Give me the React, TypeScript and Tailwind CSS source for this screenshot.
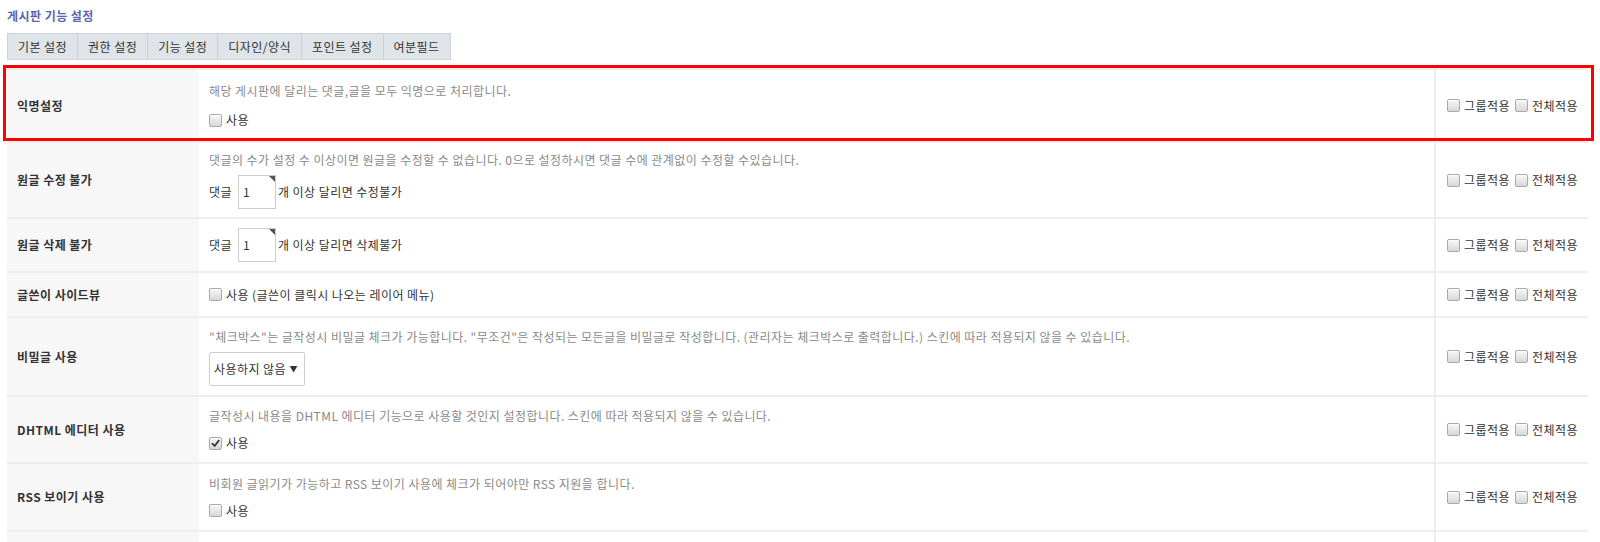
import React from "react";

function Box({ checked = false }: { checked?: boolean }) {
  return (
    <span className="inline-flex h-[13px] w-[13px] shrink-0 items-center justify-center rounded-[2px] border border-[#a9a9a9] bg-[linear-gradient(#f7f7f7,#d8d8d8)] shadow-[inset_0_1px_0_#fff]">
      {checked && (
        <svg width="9" height="9" viewBox="0 0 10 10">
          <path d="M1.5 5.2 L4 7.8 L8.6 1.8" fill="none" stroke="#333" strokeWidth="1.9" strokeLinecap="round" strokeLinejoin="round" />
        </svg>
      )}
    </span>
  );
}

function Check({ label, checked = false }: { label: string; checked?: boolean }) {
  return (
    <span className="inline-flex items-center gap-[4px] text-[#333] leading-[18px]">
      <Box checked={checked} />
      <span>{label}</span>
    </span>
  );
}

function NumBox() {
  return (
    <span className="relative inline-flex h-[34px] w-[38px] items-center border border-[#cccccc] bg-white pl-[4px] text-[12px] text-[#333]">
      1
      <span className="absolute right-0 top-0 h-0 w-0 border-l-[6px] border-t-[6px] border-l-transparent border-t-[#555]" />
    </span>
  );
}

function Row({
  label,
  h,
  children,
  highlight = false,
  gap = "gap-[9px]",
  empty = false,
}: {
  label: string;
  h: string;
  children?: React.ReactNode;
  highlight?: boolean;
  gap?: string;
  empty?: boolean;
}) {
  return (
    <div className={`relative flex border-b-2 border-[#eeeeee] ${h}`}>
      <div className="flex w-[192px] shrink-0 items-center bg-[#f7f7f7] pl-[10px] font-bold text-[#333]">
        {label}
      </div>
      <div className={`flex flex-1 flex-col justify-center pl-[10px] ${gap}`}>{children}</div>
      <div className="flex w-[154px] shrink-0 items-center gap-[5px] border-l-2 border-[#eeeeee] pl-[11px]">
        {!empty && (
          <>
            <Check label="그룹적용" />
            <Check label="전체적용" />
          </>
        )}
      </div>
      {highlight && (
        <div className="pointer-events-none absolute -left-[4px] -right-[6px] -top-[5px] bottom-[0px] border-[3px] border-[#ff0000]" />
      )}
    </div>
  );
}

function Desc({ children }: { children: React.ReactNode }) {
  return <div className="leading-[18px] text-[#8a8a8a]">{children}</div>;
}

export default function App() {
  const tabs = ["기본 설정", "권한 설정", "기능 설정", "디자인/양식", "포인트 설정", "여분필드"];
  return (
    <div className="h-[542px] overflow-hidden bg-white pl-[7px] pr-[12px] pt-[7px] font-['Noto_Sans_CJK_KR','Noto_Sans',sans-serif] text-[12px] tracking-[0.45px] text-[#333]">
      <div className="h-[18px] text-[12px] font-bold leading-[18px] text-[#5965ae]">게시판 기능 설정</div>
      <div className="mt-[8px] flex h-[27px] w-fit border border-[#cdd3d8] bg-[#dee4e8]">
        {tabs.map((t, i) => (
          <div
            key={t}
            className={`flex items-center px-[10px] leading-[25px] text-[#333] ${i > 0 ? "border-l border-[#c9cfd4]" : ""}`}
          >
            {t}
          </div>
        ))}
      </div>
      <div className="mt-[8px] border-t-2 border-[#eeeeee]">
        <Row label="익명설정" h="h-[73px]" highlight gap="gap-[11px]">
          <Desc>해당 게시판에 달리는 댓글,글을 모두 익명으로 처리합니다.</Desc>
          <div className="flex">
            <Check label="사용" />
          </div>
        </Row>
        <Row label="원글 수정 불가" h="h-[76px]" gap="gap-[6px]">
          <Desc>댓글의 수가 설정 수 이상이면 원글을 수정할 수 없습니다. 0으로 설정하시면 댓글 수에 관계없이 수정할 수있습니다.</Desc>
          <div className="flex items-center">
            <span className="mr-[6px]">댓글</span>
            <NumBox />
            <span className="ml-[2px]">개 이상 달리면 수정불가</span>
          </div>
        </Row>
        <Row label="원글 삭제 불가" h="h-[54px]">
          <div className="flex items-center">
            <span className="mr-[6px]">댓글</span>
            <NumBox />
            <span className="ml-[2px]">개 이상 달리면 삭제불가</span>
          </div>
        </Row>
        <Row label="글쓴이 사이드뷰" h="h-[45px]">
          <div className="flex">
            <Check label="사용 (글쓴이 클릭시 나오는 레이어 메뉴)" />
          </div>
        </Row>
        <Row label="비밀글 사용" h="h-[79px]" gap="gap-[6px]">
          <Desc>
            "체크박스"는 글작성시 비밀글 체크가 가능합니다. "무조건"은 작성되는 모든글을 비밀글로 작성합니다. (관리자는 체크박스로 출력합니다.) 스킨에 따라 적용되지 않을 수 있습니다.
          </Desc>
          <div className="flex">
            <span className="flex h-[34px] w-[96px] items-center justify-between rounded-[2px] border border-[#cccccc] bg-white pl-[4px] pr-[6px] text-[#333]">
              <span>사용하지 않음</span>
              <span className="text-[8px]">▼</span>
            </span>
          </div>
        </Row>
        <Row label="DHTML 에디터 사용" h="h-[67px]">
          <Desc>글작성시 내용을 DHTML 에디터 기능으로 사용할 것인지 설정합니다. 스킨에 따라 적용되지 않을 수 있습니다.</Desc>
          <div className="flex">
            <Check label="사용" checked />
          </div>
        </Row>
        <Row label="RSS 보이기 사용" h="h-[68px]">
          <Desc>비회원 글읽기가 가능하고 RSS 보이기 사용에 체크가 되어야만 RSS 지원을 합니다.</Desc>
          <div className="flex">
            <Check label="사용" />
          </div>
        </Row>
        <Row label="" h="h-[68px]" empty />
      </div>
    </div>
  );
}
